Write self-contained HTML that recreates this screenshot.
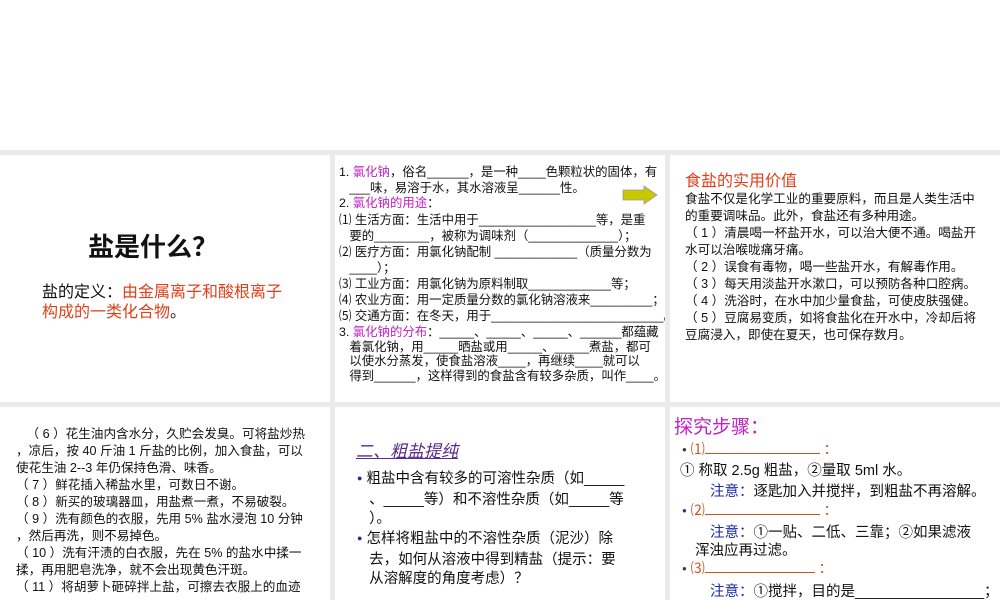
<!DOCTYPE html>
<html><head><meta charset="utf-8"><style>
body{margin:0;width:1000px;height:600px;background:#ebebeb;position:relative;overflow:hidden;font-family:"Liberation Sans","Noto Sans CJK SC",sans-serif;color:#111}
.top{position:absolute;left:0;top:0;width:1000px;height:150px;background:#fff}
.p{position:absolute;background:#fff;overflow:hidden}
.t{position:absolute;white-space:nowrap}
.m{color:#c21fc4}
</style></head><body>
<div class="top"></div>
<div class="p" style="left:0;top:155px;width:330px;height:247px">
 <div class="t" style="left:88px;top:72px;font-size:26px;font-weight:bold">盐是什么？</div>
 <div class="t" style="left:42px;top:128px;font-size:16px;line-height:20px">盐的定义：<span style="color:#e0401a">由金属离子和酸根离子</span><br><span style="color:#e0401a">构成的一类化合物</span>。</div>
</div>
<div class="p" style="left:335px;top:155px;width:330px;height:247px;font-size:12.4px">
 <div class="t" style="left:4px;top:9px;line-height:16px">1. <span class="m">氯化钠</span>，俗名______，是一种____色颗粒状的固体，有<br>&nbsp;&nbsp;&nbsp;___味，易溶于水，其水溶液呈______性。</div>
 <div class="t" style="left:4px;top:40px;line-height:16px">2. <span class="m">氯化钠的用途</span>：</div>
 <div class="t" style="left:4px;top:57px;line-height:16px">⑴ 生活方面：生活中用于_________________等，是重<br>&nbsp;&nbsp;&nbsp;要的________，被称为调味剂（_____________）；<br>⑵ 医疗方面：用氯化钠配制 ____________（质量分数为<br>&nbsp;&nbsp;&nbsp;____）；<br>⑶ 工业方面：用氯化钠为原料制取____________等；<br>⑷ 农业方面：用一定质量分数的氯化钠溶液来_________；<br>⑸ 交通方面：在冬天，用于_________________________。</div>
 <div class="t" style="left:4px;top:170px;line-height:14.5px">3. <span class="m">氯化钠的分布</span>：_____、_____、_____、______都蕴藏<br>&nbsp;&nbsp;&nbsp;着氯化钠，用_____晒盐或用_____、_____煮盐，都可<br>&nbsp;&nbsp;&nbsp;以使水分蒸发，使食盐溶液____，再继续____就可以<br>&nbsp;&nbsp;&nbsp;得到______，这样得到的食盐含有较多杂质，叫作____。</div>
 <svg style="position:absolute;left:287px;top:30px" width="36" height="20"><polygon points="1,5 22,5 22,1 35,10 22,19 22,15 1,15" fill="#c8c800" stroke="#999" stroke-width="0.8"/></svg>
</div>
<div class="p" style="left:670px;top:155px;width:330px;height:247px;font-size:12.6px">
 <div class="t" style="left:15px;top:12px;font-size:16px;color:#e0401a">食盐的实用价值</div>
 <div class="t" style="left:15px;top:36px;line-height:17px">食盐不仅是化学工业的重要原料，而且是人类生活中<br>的重要调味品。此外，食盐还有多种用途。<br>（ 1 ）清晨喝一杯盐开水，可以治大便不通。喝盐开<br>水可以治喉咙痛牙痛。<br>（ 2 ）误食有毒物，喝一些盐开水，有解毒作用。<br>（ 3 ）每天用淡盐开水漱口，可以预防各种口腔病。<br>（ 4 ）洗浴时，在水中加少量食盐，可使皮肤强健。<br>（ 5 ）豆腐易变质，如将食盐化在开水中，冷却后将<br>豆腐浸入，即使在夏天，也可保存数月。</div>
</div>
<div class="p" style="left:0;top:407px;width:330px;height:193px;font-size:12.6px">
 <div class="t" style="left:16px;top:19px;line-height:17px">&nbsp;&nbsp;&nbsp;（ 6 ）花生油内含水分，久贮会发臭。可将盐炒热<br>，凉后，按 40 斤油 1 斤盐的比例，加入食盐，可以<br>使花生油 2--3 年仍保持色滑、味香。<br>（ 7 ）鲜花插入稀盐水里，可数日不谢。<br>（ 8 ）新买的玻璃器皿，用盐煮一煮，不易破裂。<br>（ 9 ）洗有颜色的衣服，先用 5% 盐水浸泡 10 分钟<br>，然后再洗，则不易掉色。<br>（ 10 ）洗有汗渍的白衣服，先在 5% 的盐水中揉一<br>揉，再用肥皂洗净，就不会出现黄色汗斑。<br>（ 11 ）将胡萝卜砸碎拌上盐，可擦去衣服上的血迹</div>
</div>
<div class="p" style="left:335px;top:407px;width:330px;height:193px;font-size:14.5px">
 <div class="t" style="left:21px;top:30px;font-size:17px;color:#5a2a8a;font-style:italic;text-decoration:underline">二、粗盐提纯</div>
 <div class="t" style="left:22px;top:63px;line-height:19.5px"><span style="font-size:9px;color:#3a2a7a;position:relative;top:-2px">●</span> 粗盐中含有较多的可溶性杂质（如_____<br>&nbsp;&nbsp;&nbsp;、_____等）和不溶性杂质（如_____等<br>&nbsp;&nbsp;&nbsp;）。</div>
 <div class="t" style="left:22px;top:123px;line-height:19.5px"><span style="font-size:9px;color:#3a2a7a;position:relative;top:-2px">●</span> 怎样将粗盐中的不溶性杂质（泥沙）除<br>&nbsp;&nbsp;&nbsp;去，如何从溶液中得到精盐（提示：要<br>&nbsp;&nbsp;&nbsp;从溶解度的角度考虑）？</div>
</div>
<div class="p" style="left:670px;top:407px;width:330px;height:193px;font-size:14.5px">
 <div class="t" style="left:4px;top:5px;font-size:19px;color:#c21fc4">探究步骤：</div>
 <div class="t" style="left:12px;top:32px;color:#d05020;font-size:14px"><span style="font-size:8px;color:#3a2a7a;position:relative;top:-2px">●</span> ⑴<span style="display:inline-block;width:115px;border-bottom:1px solid #d05020;height:13px"></span> ：</div>
 <div class="t" style="left:10px;top:52px">① 称取 2.5g 粗盐，②量取 5ml 水。</div>
 <div class="t" style="left:40px;top:73px"><span style="color:#1a2aa8">注意：</span>逐匙加入并搅拌，到粗盐不再溶解。</div>
 <div class="t" style="left:12px;top:93px;color:#d05020;font-size:14px"><span style="font-size:8px;color:#3a2a7a;position:relative;top:-2px">●</span> ⑵<span style="display:inline-block;width:115px;border-bottom:1px solid #d05020;height:13px"></span> ：</div>
 <div class="t" style="left:40px;top:114px"><span style="color:#1a2aa8">注意：</span>①一贴、二低、三靠；②如果滤液</div>
 <div class="t" style="left:25px;top:132px">浑浊应再过滤。</div>
 <div class="t" style="left:12px;top:151px;color:#d05020;font-size:14px"><span style="font-size:8px;color:#3a2a7a;position:relative;top:-2px">●</span> ⑶<span style="display:inline-block;width:110px;border-bottom:1px solid #d05020;height:13px"></span> ：</div>
 <div class="t" style="left:40px;top:173px"><span style="color:#1a2aa8">注意：</span>①搅拌，目的是________________；</div>
 <div class="t" style="left:25px;top:191px">②蒸发皿中出现较多固体时，停止加热</div>
</div>
</body></html>
